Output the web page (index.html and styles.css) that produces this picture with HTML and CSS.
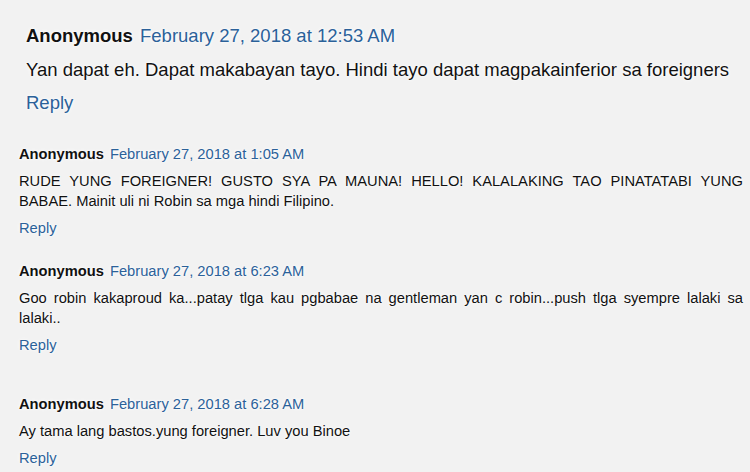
FILE: index.html
```html
<!DOCTYPE html>
<html lang="tl">
<head>
  <meta charset="UTF-8">
  <meta name="viewport" content="width=device-width, initial-scale=1.0">
  <title>Comments</title>
  <link rel="stylesheet" href="styles.css">
</head>
<body>
  <ol class="comment-list">
    <li class="comment comment-big">
      <div class="comment-head">
        <span class="user">Anonymous</span>
        <a class="time" href="#">February 27, 2018 at 12:53 AM</a>
      </div>
      <p class="text">Yan dapat eh. Dapat makabayan tayo. Hindi tayo dapat magpakainferior sa foreigners</p>
      <a class="reply" href="#">Reply</a>
    </li>

    <li class="comment">
      <div class="comment-head">
        <span class="user">Anonymous</span>
        <a class="time" href="#">February 27, 2018 at 1:05 AM</a>
      </div>
      <p class="text">RUDE YUNG FOREIGNER! GUSTO SYA PA MAUNA! HELLO! KALALAKING TAO PINATATABI YUNG BABAE. Mainit uli ni Robin sa mga hindi Filipino.</p>
      <a class="reply" href="#">Reply</a>
    </li>

    <li class="comment">
      <div class="comment-head">
        <span class="user">Anonymous</span>
        <a class="time" href="#">February 27, 2018 at 6:23 AM</a>
      </div>
      <p class="text">Goo robin kakaproud ka...patay tlga kau pgbabae na gentleman yan c robin...push tlga syempre lalaki sa lalaki..</p>
      <a class="reply" href="#">Reply</a>
    </li>

    <li class="comment comment-spaced">
      <div class="comment-head">
        <span class="user">Anonymous</span>
        <a class="time" href="#">February 27, 2018 at 6:28 AM</a>
      </div>
      <p class="text">Ay tama lang bastos.yung foreigner. Luv you Binoe</p>
      <a class="reply" href="#">Reply</a>
    </li>
  </ol>
</body>
</html>
```

FILE: styles.css
```css
body {
  margin: 0;
  padding: 23px 7px 0 19px;
  background: #f2f2f2;
  font-family: "Liberation Sans", Arial, sans-serif;
  color: #111;
  text-shadow: 0 0 2px #fff, 0 0 4px #fff;
  overflow: hidden;
}

.comment-list {
  list-style: none;
  margin: 0;
  padding: 0;
}

.comment {
  font-size: 14.7px;
  line-height: 20px;
  margin-bottom: 23px;
}

.comment-head {
  margin-bottom: 7px;
  white-space: nowrap;
}

.user {
  font-weight: bold;
  margin-right: 2px;
}

.time,
.reply {
  color: #2b6199;
  text-decoration: none;
}

.text {
  margin: 0 0 7px;
  text-align: justify;
}

.reply {
  display: inline-block;
}

/* first comment is shown a bit larger */
.comment-big {
  padding-left: 7px;
  font-size: 18.5px;
  line-height: 25px;
  margin-bottom: 29px;
}

.comment-big .comment-head {
  margin-bottom: 9px;
}

.comment-big .text {
  margin-bottom: 8px;
  text-align: left;
  white-space: nowrap;
}

.comment-spaced {
  margin-top: 39px;
}
```
